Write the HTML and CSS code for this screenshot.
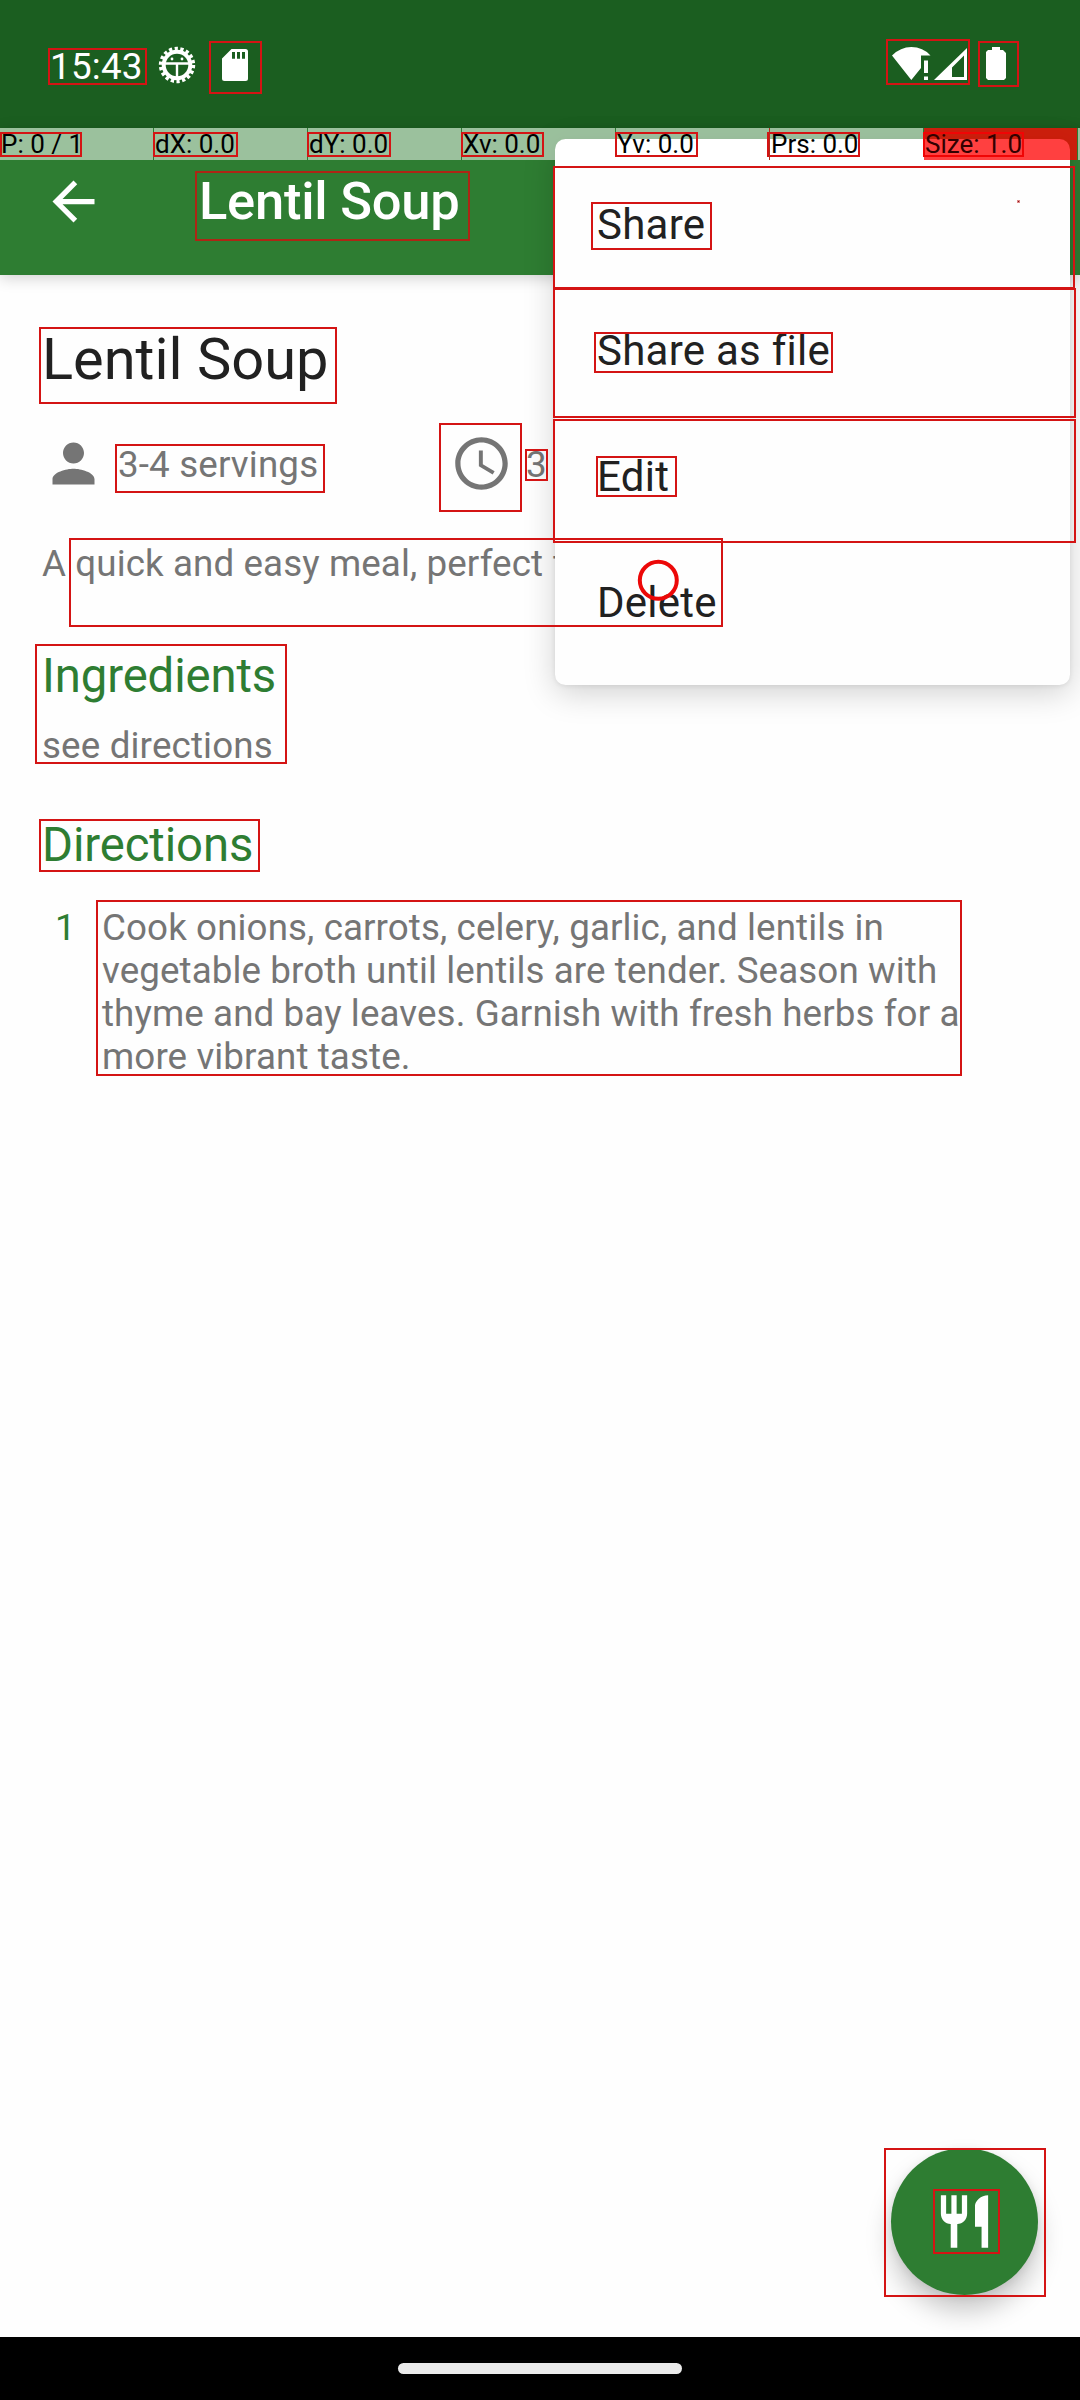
FILE: index.html
```
<!DOCTYPE html>
<html lang="en">
<head>
<meta charset="utf-8">
<title>Lentil Soup</title>
<link rel="stylesheet" href="styles.css">
</head>
<body>
<div class="screen">
  <header class="status-bar">
    <div class="status-left">
      <span class="clock">15:43</span>
      <svg class="bug-icon" viewBox="-20 -20 40 40" width="40" height="40">
        <circle r="13.3" fill="none" stroke="#fff" stroke-width="4"/>
        <circle r="16.200" fill="none" stroke="#fff" stroke-width="4" stroke-dasharray="3.200 2.455"/>
        <path d="M-13-1.500H13M0-1V14" stroke="#fff" stroke-width="2.400"/>
        <circle cx="-5" cy="-6" r="1.400" fill="#fff"/><circle cx="5" cy="-6" r="1.400" fill="#fff"/>
      </svg>
      <svg class="sd-icon" viewBox="0 0 26 32" width="26" height="32">
        <path fill="#fff" fill-rule="evenodd" d="M9.500 0H23.500a2.500 2.500 0 0 1 2.500 2.500V29.500a2.500 2.500 0 0 1-2.500 2.500H2.500A2.500 2.500 0 0 1 0 29.500V9.500ZM10 3V9.700h3V3ZM15 3V9.700h3V3ZM20 3V9.700h3V3Z"/>
      </svg>
    </div>
    <div class="status-right">
      <svg viewBox="0 0 76 34" width="76" height="34">
        <path fill="#fff" d="M0 8.500Q8.500 0 19.300 0Q31 0 38.500 8.500H29V21L19.300 33ZM32 13.500h4V26h-4ZM32 29.500h4V33h-4Z"/>
        <path fill="#fff" fill-rule="evenodd" d="M42 33 75 1V33ZM60 20.500V30H72V8.500Z"/>
      </svg>
      <svg viewBox="0 0 20 33" width="20" height="33">
        <path fill="#fff" d="M6 0h8v3h3l3 3v25l-2 2H2l-2-2V5l2-2h4Z"/>
      </svg>
    </div>
  </header>

  <div class="app-bar">
    <svg class="back" viewBox="0 0 24 24" width="63" height="63"><path fill="#fff" d="M20 11H7.830l5.590-5.590L12 4l-8 8 8 8 1.410-1.410L7.830 13H20v-2z"/></svg>
    <h1 class="app-title">Lentil Soup</h1>
  </div>

  <main class="recipe">
    <h2 class="recipe-name">Lentil Soup</h2>
    <div class="facts">
      <div class="fact fact-servings">
        <svg viewBox="0 0 24 24" width="63" height="63"><path fill="#757575" d="M12 12c2.210 0 4-1.790 4-4s-1.790-4-4-4-4 1.790-4 4 1.790 4 4 4zm0 2c-2.670 0-8 1.340-8 4v2h16v-2c0-2.660-5.330-4-8-4z"/></svg>
        <span>3-4 servings</span>
      </div>
      <div class="fact">
        <svg viewBox="0 0 24 24" width="63" height="63"><path fill="#757575" d="M11.990 2C6.470 2 2 6.480 2 12s4.470 10 9.990 10C17.520 22 22 17.520 22 12S17.520 2 11.990 2zM12 20c-4.420 0-8-3.580-8-8s3.580-8 8-8 8 3.580 8 8-3.580 8-8 8zm.5-13H11v6l5.250 3.150.75-1.230-4.500-2.670z"/></svg>
        <span>3</span>
      </div>
    </div>
    <p class="summary">A quick and easy meal, perfect for</p>
    <h3 class="section">Ingredients</h3>
    <p class="ingredients">see directions</p>
    <h3 class="section">Directions</h3>
    <div class="step">
      <span class="step-number">1</span>
      <p class="step-text">Cook onions, carrots, celery, garlic, and lentils in<br>vegetable broth until lentils are tender. Season with<br>thyme and bay leaves. Garnish with fresh herbs for a<br>more vibrant taste.</p>
    </div>
  </main>

  <footer class="nav-bar"><div class="nav-pill"></div></footer>

  <div class="fab">
    <svg viewBox="0 0 24 24" width="63" height="63"><path fill="#fff" d="M11 9H9V2H7v7H5V2H3v7c0 2.120 1.660 3.840 3.750 3.970V22h2.500v-9.030C11.340 12.840 13 11.120 13 9V2h-2v7zm5-3v8h2.500v8H21V2c-2.760 0-5 2.240-5 4z"/></svg>
  </div>

  <nav class="menu">
    <div class="menu-item">Share</div>
    <div class="menu-item">Share as file</div>
    <div class="menu-item">Edit</div>
    <div class="menu-item">Delete</div>
  </nav>

  <div class="pointer-bar">
    <span class="cell">P: 0 / 1</span>
    <span class="cell">dX: 0.0</span>
    <span class="cell">dY: 0.0</span>
    <span class="cell">Xv: 0.0</span>
    <span class="cell">Yv: 0.0</span>
    <span class="cell">Prs: 0.0</span>
    <span class="cell cell-hot">Size: 1.0</span>
    <span class="cell-rest"></span>
  </div>

  <svg class="bounds" viewBox="0 0 1080 2400" width="1080" height="2400">
    <g fill="none" stroke="#d41414" stroke-width="2">
      <rect x="49" y="49" width="97" height="35"/>
      <rect x="210" y="42" width="51" height="51"/>
      <rect x="887" y="40" width="82" height="44"/>
      <rect x="979" y="42" width="39" height="44"/>
      <rect x="1" y="133" width="80" height="23"/>
      <rect x="154" y="133" width="83" height="23"/>
      <rect x="308" y="133" width="82" height="23"/>
      <rect x="462" y="133" width="81" height="23"/>
      <rect x="616" y="133" width="81" height="23"/>
      <rect x="768" y="133" width="91" height="23"/>
      <rect x="924" y="133" width="99" height="23" stroke="#f00505"/>
      <rect x="196" y="172" width="273" height="68" stroke="#ad2615"/>
      <rect x="554" y="167" width="520" height="121"/>
      <rect x="554" y="289" width="521" height="128"/>
      <rect x="554" y="420" width="521" height="122"/>
      <rect x="592" y="203" width="119" height="46"/>
      <rect x="595" y="333" width="237" height="39"/>
      <rect x="597" y="457" width="79" height="39"/>
      <rect x="70" y="539" width="652" height="87"/>
      <rect x="440" y="424" width="81" height="87"/>
      <rect x="526" y="450" width="21" height="30"/>
      <rect x="40" y="328" width="296" height="75"/>
      <rect x="116" y="445" width="208" height="47"/>
      <rect x="36" y="645" width="250" height="118"/>
      <rect x="40" y="820" width="219" height="51"/>
      <rect x="97" y="901" width="864" height="174"/>
      <rect x="885" y="2149" width="160" height="147"/>
      <rect x="934" y="2190" width="65" height="63"/>
    </g>
    <path d="M769.500 128V160" stroke="#b22a1c"/>
    <rect x="1017" y="200" width="3" height="3" fill="#d88"/><rect x="1018" y="201" width="1" height="1" fill="#811"/>
    <circle cx="658.300" cy="580.300" r="18.500" fill="none" stroke="#ec0808" stroke-width="4"/>
  </svg>
</div>
</body>
</html>
```
FILE: styles.css
```
* { box-sizing: border-box; margin: 0; padding: 0; }
body { background: #fff; font-family: Roboto, "Liberation Sans", sans-serif; }
svg { display: block; flex: none; }

.screen {
  position: relative;
  display: flex;
  flex-direction: column;
  width: 1080px;
  height: 2400px;
  overflow: hidden;
  background: #fefefe;
}

.status-bar {
  display: flex;
  justify-content: space-between;
  height: 128px;
  padding: 45px 74px 0 50px;
  background: #1b5e20;
  color: #fff;
}
.status-left, .status-right { display: flex; align-items: flex-start; }
.clock { width: 107px; font-size: 36.750px; line-height: 43px; letter-spacing: .25px; }
.sd-icon { margin: 4px 0 0 25px; }
.status-right { gap: 18px; padding-top: 2px; }

.app-bar {
  display: flex;
  height: 147px;
  padding: 42px;
  background: #2e7d32;
  color: #fff;
  box-shadow: 0 3px 14px rgba(0, 0, 0, .18);
  z-index: 1;
}
.app-title {
  margin: 0 0 0 94px;
  font-size: 52.500px;
  line-height: 62px;
  font-weight: 500;
  letter-spacing: -.25px;
  white-space: nowrap;
}

.recipe { flex: 1; padding: 50px 42px 0; color: #757575; font-size: 36.750px; line-height: 43px; letter-spacing: .1px; }
.recipe-name { height: 68px; color: #212121; font-size: 57.750px; line-height: 68px; font-weight: 400; letter-spacing: 0; }
.facts { display: flex; padding-top: 39px; height: 149px; }
.fact { display: flex; align-items: flex-start; gap: 13px; }
.fact span { padding-top: 11px; }
.fact-servings { width: 408px; letter-spacing: .15px; }
.summary { height: 107px; white-space: nowrap; }
.section { height: 75px; color: #2e7d32; font-size: 47.250px; line-height: 55px; font-weight: 400; letter-spacing: -.1px; }
.ingredients { height: 94px; letter-spacing: .15px; }
.step { display: flex; margin-top: 13px; }
.step-number { width: 60px; padding-left: 13px; color: #2e7d32; }
.step-text { white-space: nowrap; }

.nav-bar { display: flex; justify-content: center; align-items: center; height: 63px; background: #000; }
.nav-pill { width: 284px; height: 11px; border-radius: 5.500px; background: #ebebeb; }

.fab {
  position: absolute;
  right: 42px;
  bottom: 105px;
  display: grid;
  place-items: center;
  width: 147px;
  height: 147px;
  border-radius: 50%;
  background: #2e7d32;
  box-shadow: 0 16px 26px rgba(0, 0, 0, .22), 0 2px 8px rgba(0, 0, 0, .08);
  clip-path: inset(-60px -60px -42px -60px);
}

.menu {
  position: absolute;
  top: 139px;
  right: 10px;
  z-index: 2;
  width: 515px;
  padding: 21px 0;
  border-radius: 10.500px;
  background: #fefefe;
  box-shadow: 0 8px 32px rgba(0, 0, 0, .18), 0 1px 5px rgba(0, 0, 0, .08);
  color: #212121;
  font-size: 42px;
  letter-spacing: .25px;
}
.menu-item { height: 126px; padding: 2px 42px 0; line-height: 126px; white-space: nowrap; }

.pointer-bar {
  position: absolute;
  top: 128px;
  left: 0;
  z-index: 3;
  display: flex;
  gap: 1px;
  width: 1080px;
  height: 32px;
  color: #000;
  font-size: 26px;
  line-height: 32px;
}
.cell { width: 153px; padding-left: 1px; background: rgba(255, 255, 255, .52); white-space: nowrap; }
.cell-hot { background: rgba(255, 0, 0, .75); color: #300; }
.cell-rest { flex: 1; background: rgba(255, 255, 255, .52); }

.bounds { position: absolute; inset: 0; z-index: 4; }
```
